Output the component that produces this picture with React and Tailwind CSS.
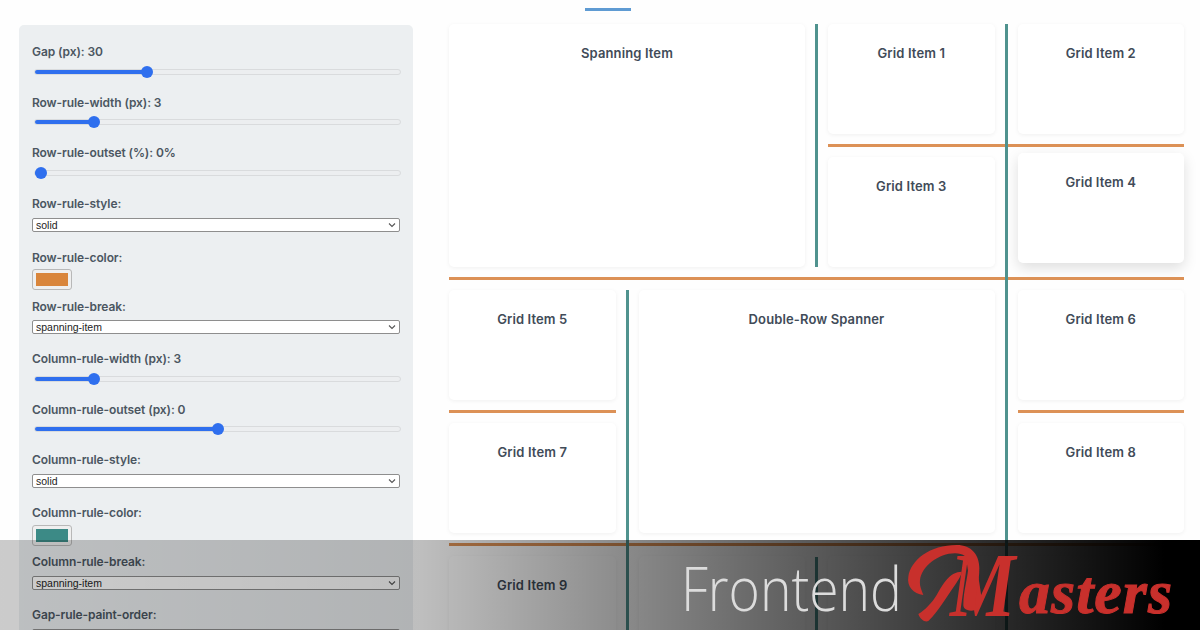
const labelCls = "block font-['Inter',sans-serif] text-[12px] leading-[15px] font-semibold text-[#4b5661] tracking-[-0.1px]";

function Slider({ label, value, min, max }) {
  const pct = ((value - min) / (max - min)) * 100;
  const stop = `calc(6px + (100% - 12px) * ${pct / 100})`;
  return (
    <div className="mb-[20px]">
      <label className={labelCls}>{label}</label>
      <input
        type="range"
        min={min}
        max={max}
        defaultValue={value}
        style={{ background: `linear-gradient(to right, #2f6fee ${stop}, #eceef0 ${stop})` }}
        className="block appearance-none mt-[9.5px] ml-[2px] w-[367px] h-[6px] rounded-full border border-[#d9dbdd] [&::-webkit-slider-thumb]:appearance-none [&::-webkit-slider-thumb]:w-[12px] [&::-webkit-slider-thumb]:h-[12px] [&::-webkit-slider-thumb]:rounded-full [&::-webkit-slider-thumb]:bg-[#2f6fee]"
      />
    </div>
  );
}

function Select({ label, value, className = "mb-[18px]", gap = "mt-[7px]" }) {
  return (
    <div className={className}>
      <label className={labelCls}>{label}</label>
      <div className={`relative ${gap} w-[368px] h-[14px]`}>
        <select className="block appearance-none w-full h-full bg-white border border-[#8e8e8e] rounded-[2px] pl-[3px] font-['Liberation_Sans',sans-serif] text-[10.5px] leading-[12px] text-[#222]">
          <option>{value}</option>
        </select>
        <svg className="absolute right-[4px] top-[4px] w-[8px] h-[6px] text-[#555]" viewBox="0 0 8 6" fill="none" stroke="currentColor" strokeWidth="1.1">
          <path d="M1 1.5 L4 4.5 L7 1.5" />
        </svg>
      </div>
    </div>
  );
}

function Swatch({ label, color, className = "mb-[8.5px]", gap = "mt-[4.5px]" }) {
  return (
    <div className={className}>
      <label className={labelCls}>{label}</label>
      <div className={`${gap} w-[40px] h-[21px] rounded-[3px] border border-[#b8b8b8] bg-[#efefef] p-[3px]`}>
        <div className={`w-full h-full ${color}`} />
      </div>
    </div>
  );
}

function Card({ children, className = "" }) {
  return (
    <div className={`bg-white rounded-[5px] shadow-[0_1px_4px_rgba(0,0,0,0.06)] text-center pt-[21px] font-['Inter',sans-serif] text-[13px] leading-[16px] font-semibold tracking-[0.12px] text-[#414b58] ${className}`}>
      {children}
    </div>
  );
}

export default function App() {
  return (
    <div className="relative h-[630px] w-[1200px] overflow-hidden bg-[#fefefe]">
      <div className="ml-[585px] mt-[8px] w-[46px] h-[3px] bg-[#5f9bd3]" />
      <div className="flex gap-[36px] pl-[19px] mt-[13px]">
        <aside className="w-[394px] h-[640px] mt-[1px] shrink-0 rounded-[5px] bg-[#eceff1] pl-[13px] pt-[19px]">
          <Slider label="Gap (px): 30" value={30} min={0} max={100} />
          <Slider label="Row-rule-width (px): 3" value={3} min={0} max={20} />
          <Slider label="Row-rule-outset (%): 0%" value={0} min={0} max={100} />
          <Select label="Row-rule-style:" value="solid" />
          <Swatch label="Row-rule-color:" color="bg-[#d9853b]" />
          <Select label="Row-rule-break:" value="spanning-item" className="mb-[17px]" gap="mt-[6.5px]" />
          <Slider label="Column-rule-width (px): 3" value={3} min={0} max={20} />
          <Slider label="Column-rule-outset (px): 0" value={0} min={-50} max={50} />
          <Select label="Column-rule-style:" value="solid" className="mb-[16.5px]" />
          <Swatch label="Column-rule-color:" color="bg-[#3c8a86]" className="mb-[8px]" gap="mt-[5.5px]" />
          <Select label="Column-rule-break:" value="spanning-item" className="mb-[17px]" />
          <Select label="Gap-rule-paint-order:" value="row-over-column" />
        </aside>

        <div className="relative w-[735px] h-[640px] grid grid-cols-4 gap-[23px] auto-rows-[110px]">
          <Card className="col-span-2 row-span-2">Spanning Item</Card>
          <Card>Grid Item 1</Card>
          <Card>Grid Item 2</Card>
          <Card>Grid Item 3</Card>
          <Card className="-translate-y-[4px] shadow-[0_5px_14px_rgba(0,0,0,0.13)]">Grid Item 4</Card>
          <Card>Grid Item 5</Card>
          <Card className="col-span-2 row-span-2">Double-Row Spanner</Card>
          <Card>Grid Item 6</Card>
          <Card>Grid Item 7</Card>
          <Card>Grid Item 8</Card>
          <Card>Grid Item 9</Card>
          <Card />
          <Card />
          <Card />

          <div className="absolute left-[379px] top-[120px] w-[356px] h-[2.5px] bg-[#dc9156]" />
          <div className="absolute left-0 top-[253px] w-[735px] h-[2.5px] bg-[#dc9156]" />
          <div className="absolute left-0 top-[386px] w-[167px] h-[2.5px] bg-[#dc9156]" />
          <div className="absolute left-[569px] top-[386px] w-[166px] h-[2.5px] bg-[#dc9156]" />
          <div className="absolute left-0 top-[519px] w-[735px] h-[2.5px] bg-[#dc9156]" />
          <div className="absolute left-[366px] top-0 w-[2.5px] h-[243px] bg-[#4f928e]" />
          <div className="absolute left-[556px] top-0 w-[2.5px] h-[640px] bg-[#4f928e]" />
          <div className="absolute left-[177px] top-[266px] w-[2.5px] h-[374px] bg-[#4f928e]" />
          <div className="absolute left-[366px] top-[533px] w-[2.5px] h-[107px] bg-[#4f928e]" />
        </div>
      </div>

      <div className="absolute left-0 right-0 bottom-0 h-[90px] bg-[linear-gradient(to_right,rgba(0,0,0,0.2),rgba(0,0,0,0.25)_35%,rgba(0,0,0,1)_97%)]">
        <span className="absolute left-[681px] top-[10px] origin-left scale-x-[0.875] font-['Open_Sans',sans-serif] font-light text-[61px] leading-[76px] text-[#dcdcdc]">
          Frontend
        </span>
        <span className="absolute left-[950px] top-[1px] origin-left scale-x-[0.8] font-['Liberation_Serif',serif] italic font-bold text-[#c8302c] text-[92px] leading-[88px]">
          M
        </span>
        <span className="absolute left-[1019px] top-[21px] font-['Liberation_Serif',serif] italic font-bold text-[#c8302c] text-[62px] leading-[62px] tracking-[1px] [-webkit-text-stroke:1px_#c8302c]">
          asters
        </span>
        <svg className="absolute left-[900px] top-0 w-[150px] h-[90px]" viewBox="0 0 450 270" fill="#c8302c">
          <path d="M70 165 C40 160 20 140 25 110 C32 60 90 15 170 15 C215 15 238 45 238 85 C238 130 225 165 225 210 C210 215 190 210 190 195 C190 150 205 110 205 75 C205 50 190 40 165 40 C115 40 65 80 60 120 C58 140 65 150 70 165 Z" />
          <path d="M185 95 C150 95 130 130 110 165 C95 190 75 210 55 222 C60 238 75 248 85 243 C115 215 140 170 165 135 C175 120 185 105 185 95 Z" />
        </svg>
      </div>
    </div>
  );
}
